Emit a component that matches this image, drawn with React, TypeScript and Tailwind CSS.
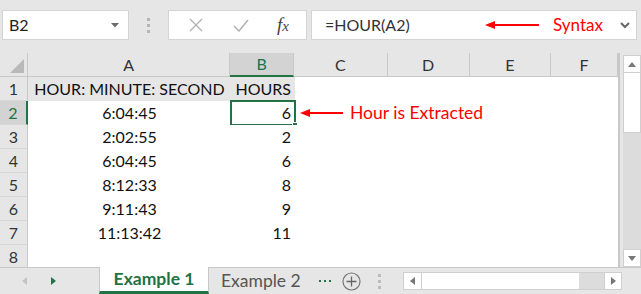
import React from "react";

const font = "font-['Lato','Liberation_Sans',sans-serif]";

const columns = [
  { label: "A", cls: "w-[203px]" },
  { label: "B", cls: "w-[64px]", selected: true },
  { label: "C", cls: "w-[94px]" },
  { label: "D", cls: "w-[82px]" },
  { label: "E", cls: "w-[82px]" },
  { label: "F", cls: "w-[67px]" },
];

const rows = [
  { n: 1, a: "HOUR: MINUTE: SECOND", b: "HOURS", head: true },
  { n: 2, a: "6:04:45", b: "6", active: true },
  { n: 3, a: "2:02:55", b: "2" },
  { n: 4, a: "6:04:45", b: "6" },
  { n: 5, a: "8:12:33", b: "8" },
  { n: 6, a: "9:11:43", b: "9" },
  { n: 7, a: "11:13:42", b: "11" },
  { n: 8, a: "", b: "" },
];

function Toolbar() {
  return (
    <div className="h-[53px] shrink-0 flex items-start pt-[10px] pl-[2px]">
      {/* name box */}
      <div className="w-[127px] h-[30px] bg-white border border-[#d4d4d4] flex items-center justify-between pl-[6px] pr-[9px]">
        <span className="text-[16px] text-[#222]">B2</span>
        <svg width="8" height="5" viewBox="0 0 8 5">
          <path d="M0 0 L8 0 L4 4.5 Z" fill="#6b6b6b" />
        </svg>
      </div>
      {/* separator dots */}
      <div className="w-[39px] h-[30px] flex flex-col items-center justify-center gap-[3px]">
        <span className="w-[3px] h-[3px] bg-[#b5b5b5]" />
        <span className="w-[3px] h-[3px] bg-[#b5b5b5]" />
        <span className="w-[3px] h-[3px] bg-[#b5b5b5]" />
      </div>
      {/* formula buttons */}
      <div className="w-[139px] h-[30px] bg-white border border-[#d4d4d4] flex items-center">
        <div className="w-[50px] flex justify-center pl-[4px]">
          <svg width="14" height="14" viewBox="0 0 14 14">
            <path d="M1 1 L13 13 M13 1 L1 13" stroke="#b3b3b3" strokeWidth="1.4" />
          </svg>
        </div>
        <div className="w-[44px] flex justify-center">
          <svg width="16" height="13" viewBox="0 0 16 13">
            <path d="M1 7 L6 12 L15 1" stroke="#b3b3b3" strokeWidth="1.5" fill="none" />
          </svg>
        </div>
        <div className="w-[40px] flex justify-center">
          <span className="font-['Liberation_Serif',serif] italic text-[19px] text-[#444]">
            f<span className="text-[15px]">x</span>
          </span>
        </div>
      </div>
      {/* formula input */}
      <div className="ml-[4px] w-[326px] h-[30px] bg-white border border-[#d4d4d4] flex items-center pl-[13px] pr-[6px]">
        <span className="text-[16px] text-[#333] w-[160px]">=HOUR(A2)</span>
        <svg width="56" height="10" viewBox="0 0 56 10">
          <path d="M0 5 L10 1 L10 9 Z" fill="#ff0000" />
          <path d="M8 5 L54 5" stroke="#ff0000" strokeWidth="2" />
        </svg>
        <span className="ml-[12px] text-[17px] text-[#ff0000]">Syntax</span>
        <div className="flex-1" />
        <svg width="10" height="7" viewBox="0 0 10 7">
          <path d="M1 1 L5 5 L9 1" stroke="#666" strokeWidth="2" fill="none" />
        </svg>
      </div>
    </div>
  );
}

function HeaderRow() {
  return (
    <div className="h-[24px] flex shrink-0">
      <div className="w-[28px] h-full border-r border-b border-[#c8c8c8] flex items-end justify-end p-[3px]">
        <svg width="14" height="14" viewBox="0 0 14 14">
          <path d="M14 0 L14 14 L0 14 Z" fill="#b9b9b9" />
        </svg>
      </div>
      {columns.map((c) => (
        <div
          key={c.label}
          className={`${c.cls} h-full flex items-center justify-center text-[16px] border-r border-[#c8c8c8] ${
            c.selected
              ? "bg-[#d3d3d3] text-[#217346] border-b-2 border-b-[#217346]"
              : "text-[#333] border-b border-b-[#c8c8c8]"
          }`}
        >
          {c.label}
        </div>
      ))}
    </div>
  );
}

function DataRow({ r }: { r: (typeof rows)[number] }) {
  return (
    <div className="h-[24px] flex shrink-0 relative">
      <div
        className={`w-[28px] h-full flex items-center justify-center text-[16px] border-b border-[#d6d6d6] ${
          r.active
            ? "bg-[#d3d3d3] text-[#217346] border-r-2 border-r-[#217346]"
            : "text-[#333] border-r border-r-[#c8c8c8]"
        }`}
      >
        {r.n}
      </div>
      <div
        className={`w-[203px] h-full flex items-center justify-center text-[16px] text-[#111] ${
          r.head ? "bg-[#e7e6e6]" : "bg-white"
        }`}
      >
        {r.a}
      </div>
      <div
        className={`w-[64px] h-full flex items-center justify-end pr-[4px] text-[16px] text-[#111] relative ${
          r.head ? "bg-[#e7e6e6]" : "bg-white"
        }`}
      >
        {r.b}
        {r.active && (
          <>
            <div className="absolute -left-[1px] -top-[1px] w-[66px] h-[26px] border-2 border-[#217346]" />
            <div className="absolute -right-[3px] -bottom-[3px] w-[6px] h-[6px] bg-[#217346] border border-white" />
          </>
        )}
      </div>
      <div className="flex-1 h-full bg-white" />
      {r.active && (
        <div className="absolute left-[300px] top-0 h-full flex items-center">
          <svg width="44" height="10" viewBox="0 0 44 10">
            <path d="M0 5 L10 1 L10 9 Z" fill="#ff0000" />
            <path d="M8 5 L43 5" stroke="#ff0000" strokeWidth="2" />
          </svg>
          <span className="ml-[6px] text-[17.5px] text-[#ff0000]">Hour is Extracted</span>
        </div>
      )}
    </div>
  );
}

function VScroll() {
  return (
    <div className="w-[21px] h-full pl-[3px] pt-[2px] flex flex-col">
      <div className="h-[18px] bg-white border border-[#cfcfcf] flex items-center justify-center">
        <svg width="8" height="5" viewBox="0 0 8 5">
          <path d="M0 5 L8 5 L4 0 Z" fill="#777" />
        </svg>
      </div>
      <div className="h-[60px] bg-white border-x border-b border-[#cfcfcf]" />
      <div className="flex-1 bg-[#dcdcdc]" />
      <div className="h-[18px] bg-white border border-[#cfcfcf] flex items-center justify-center">
        <svg width="8" height="5" viewBox="0 0 8 5">
          <path d="M0 0 L8 0 L4 5 Z" fill="#777" />
        </svg>
      </div>
    </div>
  );
}

function TabBar() {
  return (
    <div className="h-[27px] shrink-0 flex items-stretch border-t border-[#c8c8c8] bg-[#e6e6e6]">
      <div className="w-[99px] flex items-center">
        <svg className="ml-[22px]" width="5" height="8" viewBox="0 0 5 8">
          <path d="M5 0 L5 8 L0 4 Z" fill="#c4c4c4" />
        </svg>
        <svg className="ml-[24px]" width="5" height="8" viewBox="0 0 5 8">
          <path d="M0 0 L0 8 L5 4 Z" fill="#217346" />
        </svg>
      </div>
      <div className="w-[110px] -mt-[1px] bg-white border-l border-r border-[#c8c8c8] border-b-[3px] border-b-[#217346] flex items-center justify-center">
        <span className="text-[17.5px] font-bold text-[#217346]">Example 1</span>
      </div>
      <div className="w-[108px] flex items-center pl-[12px]">
        <span className="text-[17.5px] text-[#555]">Example 2</span>
      </div>
      <div className="w-[20px] flex items-center gap-[3px] pl-[2px]">
        <span className="w-[2px] h-[2px] bg-[#217346]" />
        <span className="w-[2px] h-[2px] bg-[#217346]" />
        <span className="w-[2px] h-[2px] bg-[#217346]" />
      </div>
      <div className="w-[28px] flex items-center justify-center">
        <svg width="19" height="19" viewBox="0 0 19 19">
          <circle cx="9.5" cy="9.5" r="8.5" stroke="#777" strokeWidth="1.2" fill="none" />
          <path d="M9.5 4.5 L9.5 14.5 M4.5 9.5 L14.5 9.5" stroke="#666" strokeWidth="1.3" />
        </svg>
      </div>
      <div className="w-[28px] flex flex-col items-center justify-center gap-[3px]">
        <span className="w-[3px] h-[3px] bg-[#bcbcbc]" />
        <span className="w-[3px] h-[3px] bg-[#bcbcbc]" />
        <span className="w-[3px] h-[3px] bg-[#bcbcbc]" />
      </div>
      <div className="ml-[10px] w-[219px] flex items-center">
        <div className="w-full h-[18px] flex border border-[#cfcfcf] bg-white">
          <div className="w-[18px] flex items-center justify-center border-r border-[#cfcfcf]">
            <svg width="5" height="8" viewBox="0 0 5 8">
              <path d="M5 0 L5 8 L0 4 Z" fill="#777" />
            </svg>
          </div>
          <div className="w-[157px]" />
          <div className="flex-1 bg-[#dcdcdc]" />
          <div className="w-[17px] flex items-center justify-center border-l border-[#cfcfcf]">
            <svg width="5" height="8" viewBox="0 0 5 8">
              <path d="M0 0 L0 8 L5 4 Z" fill="#777" />
            </svg>
          </div>
        </div>
      </div>
    </div>
  );
}

export default function App() {
  return (
    <div className={`w-[641px] h-[294px] bg-[#e6e6e6] flex flex-col overflow-hidden ${font}`}>
      <Toolbar />
      <div className="flex-1 flex min-h-0">
        <div className="w-[621px] h-full flex flex-col overflow-hidden border-r-2 border-[#c8c8c8]">
          <HeaderRow />
          {rows.map((r) => (
            <DataRow key={r.n} r={r} />
          ))}
        </div>
        <VScroll />
      </div>
      <TabBar />
    </div>
  );
}
